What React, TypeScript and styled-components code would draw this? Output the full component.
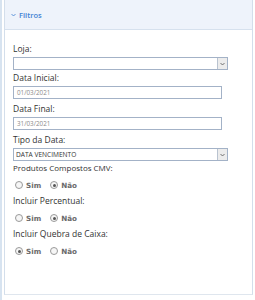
import React from 'react';
import styled, { createGlobalStyle } from 'styled-components';

const GlobalStyle = createGlobalStyle`
  html, body {
    margin: 0;
    padding: 0;
    background: #ffffff;
  }
`;

const Page = styled.div`
  width: 255px;
  height: 300px;
  display: flex;
  border-left: 2px solid #d7e3f0;
  box-sizing: border-box;
  padding-left: 2px;
`;

const Panel = styled.div`
  width: 249px;
  height: 295px;
  box-sizing: border-box;
  border: 1px solid #dfe6ee;
  border-top: none;
  border-left-color: #d3deeb;
  border-right-color: #d3deeb;
  display: flex;
  flex-direction: column;
`;

const Header = styled.div`
  height: 30px;
  flex-shrink: 0;
  box-sizing: border-box;
  background: #eef3fb;
  border-bottom: 1px solid #d6e1ee;
  display: flex;
  align-items: center;
  padding-left: 6px;
  gap: 3px;
  font-family: 'Open Sans', sans-serif;
  font-size: 7.5px;
  font-weight: 600;
  color: #3f82d4;
`;

const Chevron = styled.svg`
  width: 5px;
  height: 4px;
`;

const Body = styled.div`
  padding: 13px 0 0 8px;
  display: flex;
  flex-direction: column;
  font-family: 'Open Sans', sans-serif;
`;

const Label = styled.div<{ $gap?: number; $size?: number }>`
  font-size: ${(p) => p.$size ?? 8.5}px;
  line-height: 12px;
  color: #333333;
  margin-top: ${(p) => p.$gap ?? 0}px;
  margin-bottom: 2px;
`;

const SelectBox = styled.div`
  width: 215px;
  height: 13px;
  box-sizing: border-box;
  border: 1px solid #a3b2c7;
  display: flex;
  align-items: center;
  font-size: 6.6px;
  color: #333333;
  padding-left: 2px;
`;

const SelectText = styled.span`
  flex: 1;
`;

const ArrowButton = styled.span`
  width: 10px;
  height: 11px;
  box-sizing: border-box;
  border-left: 1px solid #b9c3d0;
  background: #ececec;
  display: flex;
  align-items: center;
  justify-content: center;
`;

const TextInput = styled.div`
  width: 209px;
  height: 13px;
  box-sizing: border-box;
  border: 1px solid #a3b2c7;
  display: flex;
  align-items: center;
  padding-left: 3px;
  font-size: 6.3px;
  color: #8a8a8a;
`;

const RadioRow = styled.div`
  display: flex;
  align-items: center;
  gap: 9px;
  padding-left: 2px;
  margin-top: 2px;
  height: 14px;
`;

const RadioOption = styled.span`
  display: flex;
  align-items: center;
  gap: 3px;
  font-family: 'DejaVu Sans', Tahoma, sans-serif;
  font-size: 7.2px;
  font-weight: bold;
  color: #6a6a6a;
`;

const Circle = styled.span<{ $checked: boolean }>`
  width: 8px;
  height: 8px;
  box-sizing: border-box;
  border-radius: 50%;
  border: 1px solid #9a9a9a;
  background: #f6f6f6;
  display: flex;
  align-items: center;
  justify-content: center;

  &::after {
    content: '';
    display: ${(p) => (p.$checked ? 'block' : 'none')};
    width: 3px;
    height: 3px;
    border-radius: 50%;
    background: #555555;
  }
`;

const Arrow = () => (
  <svg width="5" height="4" viewBox="0 0 5 4">
    <path d="M0.5 1 L2.5 3 L4.5 1" fill="none" stroke="#555" strokeWidth="0.8" />
  </svg>
);

const Select: React.FC<{ value?: string }> = ({ value }) => (
  <SelectBox>
    <SelectText>{value}</SelectText>
    <ArrowButton>
      <Arrow />
    </ArrowButton>
  </SelectBox>
);

const YesNo: React.FC<{ yes: boolean }> = ({ yes }) => (
  <RadioRow>
    <RadioOption>
      <Circle $checked={yes} />
      Sim
    </RadioOption>
    <RadioOption>
      <Circle $checked={!yes} />
      Não
    </RadioOption>
  </RadioRow>
);

const App: React.FC = () => {
  return (
    <>
      <GlobalStyle />
      <Page>
        <Panel>
          <Header>
            <Chevron viewBox="0 0 5 4">
              <path d="M0.5 1 L2.5 3 L4.5 1" fill="none" stroke="#3f82d4" strokeWidth="0.8" />
            </Chevron>
            Filtros
          </Header>
          <Body>
            <Label>Loja:</Label>
            <Select />
            <Label $gap={2}>Data Inicial:</Label>
            <TextInput>01/03/2021</TextInput>
            <Label $gap={4}>Data Final:</Label>
            <TextInput>31/03/2021</TextInput>
            <Label $gap={4}>Tipo da Data:</Label>
            <Select value="DATA VENCIMENTO" />
            <Label $gap={1} $size={8}>Produtos Compostos CMV:</Label>
            <YesNo yes={false} />
            <Label $gap={3}>Incluir Percentual:</Label>
            <YesNo yes={false} />
            <Label $gap={3}>Incluir Quebra de Caixa:</Label>
            <YesNo yes={true} />
          </Body>
        </Panel>
      </Page>
    </>
  );
};

export default App;
